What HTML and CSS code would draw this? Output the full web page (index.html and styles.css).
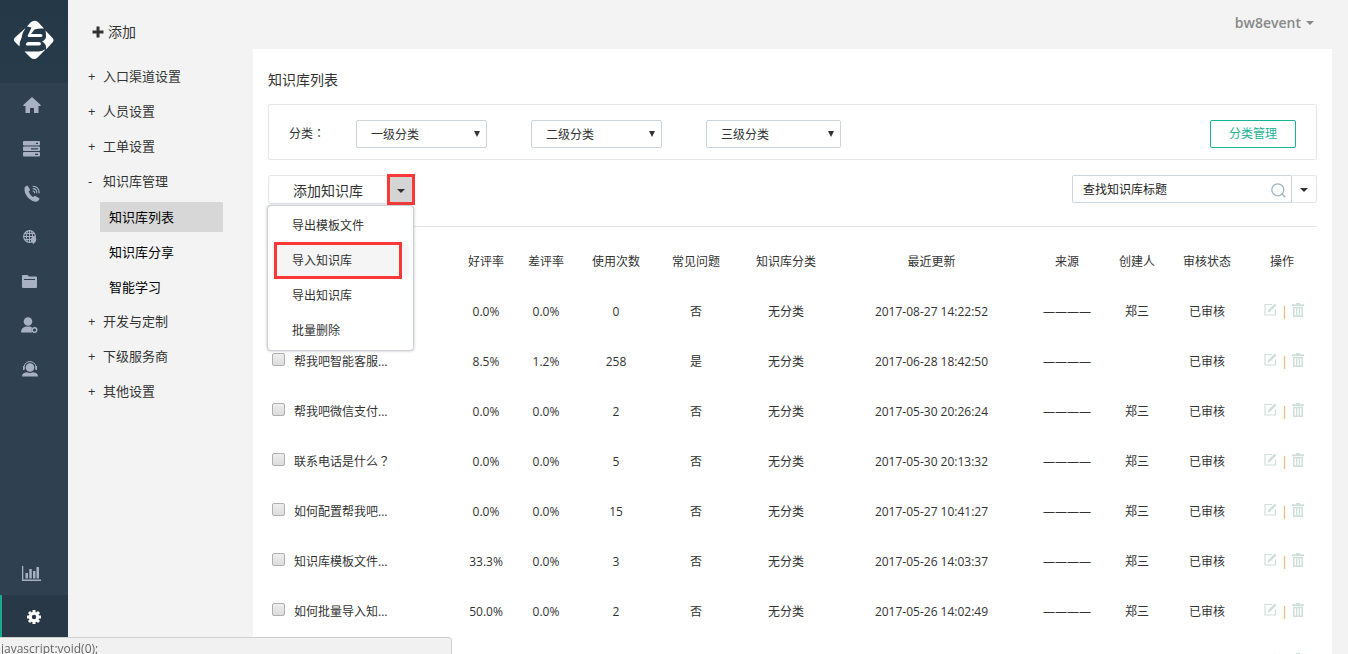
FILE: index.html
```html
<!DOCTYPE html>
<html lang="zh-CN">
<head>
<meta charset="utf-8">
<title>知识库列表</title>
<link rel="stylesheet" href="styles.css">
</head>
<body>
<svg class="defs" aria-hidden="true">
  <symbol id="edit" viewBox="0 0 13 13"><path d="M8 1.500H1v10.500h10.500V6.500" fill="none" stroke="currentColor" stroke-width="1.200"/><path d="M3.500 9.800l.8-2.800L10.800.5l1.700 1.700L6 8.800z" fill="currentColor"/></symbol>
  <symbol id="trash" viewBox="0 0 12 14"><path d="M0 1.200h4V0h4v1.200h4v2H0zM1 4h10v10H1zM2.500 5.200v7.300h1.500V5.200zM5.300 5.200v7.300h1.400V5.200zM8 5.200v7.300h1.500V5.200z" fill="currentColor" fill-rule="evenodd"/></symbol>
</svg>
<aside class="rail">
  <a class="logo" href="#" aria-label="首页">
    <svg width="40" height="40" viewBox="0 0 40 40"><path fill="#fff" d="M13 6.500l3.500-4Q20-.5 24 2l6 6.500q-6-.5-9.500 1L17 14h9.500q2 0 2 1.500t-2 1.500H14.500l-1-1 4-8.500zM11.500 8Q8 13 7.500 18q-2 3-2 8.500L1 22q-2.500-2 0-4.500zM14.500 22H25q2 0 2 1.800t-2 1.800H13q-1.500 0-1-1.800t2.500-1.800zM31.500 10.500l7 7.500q2 2 0 4.500L32 29.500q.5-3.500-1-5.500-1.500-2-3-2.500 4-2 4-5 0-3.500-.5-6zM10.500 31.500H25q4-.5 5.500-2l.5.500-7.500 7.500q-3.500 3-7 0z"/></svg>
  </a>
  <nav class="rail-nav">
    <a href="#" aria-label="主页"><svg width="18" height="16" viewBox="0 0 18 16"><path fill="currentColor" d="M9 0l9 8.300-.8.700H15.500v7H11v-5H7v5H2.500V9H.8L0 8.300z"/></svg></a>
    <a href="#" aria-label="工单"><svg width="18" height="16" viewBox="0 0 18 16"><path fill="currentColor" fill-rule="evenodd" d="M1 0h15q1 0 1 1v2.500q0 1-1 1H1q-1 0-1-1V1q0-1 1-1zM13 1.800v1.200h2V1.800zM1 5.500h15q1 0 1 1V9q0 1-1 1H1q-1 0-1-1V6.500q0-1 1-1zM8 7.300v1.200h7V7.300zM1 11h15q1 0 1 1v2.500q0 1-1 1H1q-1 0-1-1V12q0-1 1-1zM12 12.800v1.200h3v-1.200z"/></svg></a>
    <a href="#" aria-label="电话"><svg width="16" height="17" viewBox="0 0 16 17"><path fill="currentColor" d="M.8 2l2.700-1.500L6.200 5 4.700 6.500q1 3.500 4.300 5.500l2-1.200 4.700 2.700-1.200 2q-3.500 3-9-1.500Q-.7 8.500.8 2z"/><path fill="none" stroke="currentColor" stroke-width="1.100" d="M8.700 6q2 0 2 2.300M8.700 3.600q4.200 0 4.200 4.700M8.700 1.200q6.500 0 6.500 7.100"/></svg></a>
    <a class="shift" href="#" aria-label="网络"><svg width="14" height="14" viewBox="0 0 14 14"><circle cx="6.500" cy="6.500" r="5.800" fill="none" stroke="currentColor" stroke-width="1.200"/><path fill="none" stroke="currentColor" d="M6.500.5v12M.5 6.500h12M1.500 3.500h10M1.500 9.500h7M4.500 1Q2 6.500 4.500 12M8.500 1q2.500 5.500 0 11"/><path fill="currentColor" d="M10.500 7a2.800 2.800 0 0 1 2.800 2.800q0 1.700-2.800 4.200-2.800-2.500-2.800-4.200A2.800 2.800 0 0 1 10.500 7z"/></svg></a>
    <a class="shift" href="#" aria-label="文件"><svg width="15" height="13" viewBox="0 0 15 13"><path fill="currentColor" fill-rule="evenodd" d="M1 0h4.500L7 1.500h7q1 0 1 1V12q0 1-1 1H1q-1 0-1-1V1q0-1 1-1zM2 4v1h11V4z"/></svg></a>
    <a class="shift" href="#" aria-label="用户"><svg width="17" height="16" viewBox="0 0 17 16"><circle cx="7" cy="4.500" r="4.300" fill="currentColor"/><path fill="currentColor" d="M0 15.500q0-5 5-6h4q1.500.5 2 1-1 2.500 0 5z"/><circle cx="13.500" cy="13" r="2.300" fill="none" stroke="currentColor" stroke-width="1.500"/></svg></a>
    <a class="shift" href="#" aria-label="客服"><svg width="16" height="16" viewBox="0 0 16 16"><circle cx="8" cy="6.500" r="4.300" fill="currentColor"/><path fill="none" stroke="currentColor" stroke-width="1" d="M2 8V5.500Q3.500.6 8 .6t6 4.900V8"/><path fill="currentColor" d="M1 5h1.500v4H1zM13.500 5H15v4h-1.500zM0 15.500q0-4 5-4.300 3 1.500 6 0 5 .3 5 4.300z"/></svg></a>
  </nav>
  <nav class="rail-nav rail-foot">
    <a href="#" aria-label="统计"><svg width="20" height="15" viewBox="0 0 20 15"><path fill="currentColor" d="M0 0h1.300v13.500H19V15H0zM3.500 7H6v5.500H3.500zM7.300 3h2.500v9.500H7.300zM11 5h2.500v7.500H11zM14.500 1H17v11.500h-2.500z"/></svg></a>
    <a class="active" href="#" aria-label="设置"><svg width="14" height="14" viewBox="-7 -7 14 14"><circle r="3.700" fill="none" stroke="currentColor" stroke-width="3"/><path stroke="currentColor" stroke-width="3" d="M0-7v3M0 7V4M-7 0h3M7 0H4M-5-5l2 2M5 5L3 3M-5 5l2-2M5-5L3-3"/></svg></a>
  </nav>
</aside>

<nav class="side">
  <a class="add" href="#"><svg width="12" height="12" viewBox="0 0 12 12"><path stroke="currentColor" stroke-width="3" d="M6 .5v11M.5 6h11"/></svg>添加</a>
  <a class="group" href="#"><span class="sign">+</span>入口渠道设置</a>
  <a class="group" href="#"><span class="sign">+</span>人员设置</a>
  <a class="group" href="#"><span class="sign">+</span>工单设置</a>
  <a class="group" href="#"><span class="sign">-</span>知识库管理</a>
  <div class="subs">
    <a class="sub current" href="#">知识库列表</a>
    <a class="sub" href="#">知识库分享</a>
    <a class="sub" href="#">智能学习</a>
  </div>
  <a class="group" href="#"><span class="sign">+</span>开发与定制</a>
  <a class="group" href="#"><span class="sign">+</span>下级服务商</a>
  <a class="group" href="#"><span class="sign">+</span>其他设置</a>
</nav>

<div class="page">
  <header class="topbar"><button class="account" type="button">bw8event<span class="caret"></span></button></header>
  <main class="card">
    <h1>知识库列表</h1>
    <section class="filter">
      <label class="filter-label" for="c1">分类<span class="mid" lang="zh-TW">：</span></label>
      <span class="pick"><select id="c1"><option>一级分类</option></select><svg width="6" height="6" viewBox="0 0 6 6"><path d="M0 0h6L3 6z" fill="#333"/></svg></span>
      <span class="pick"><select aria-label="二级分类"><option>二级分类</option></select><svg width="6" height="6" viewBox="0 0 6 6"><path d="M0 0h6L3 6z" fill="#333"/></svg></span>
      <span class="pick wide"><select aria-label="三级分类"><option>三级分类</option></select><svg width="6" height="6" viewBox="0 0 6 6"><path d="M0 0h6L3 6z" fill="#333"/></svg></span>
      <button class="manage" type="button">分类管理</button>
    </section>
    <section class="tools">
      <div class="split">
        <button class="new" type="button">添加知识库</button>
        <button class="toggle open" type="button" aria-label="更多操作"><span class="caret"></span></button>
        <div class="menu">
          <button type="button">导出模板文件</button>
          <button class="hover" type="button">导入知识库</button>
          <button type="button">导出知识库</button>
          <button type="button">批量删除</button>
        </div>
      </div>
      <div class="search">
        <input type="text" placeholder="查找知识库标题" aria-label="查找知识库标题">
        <svg class="lens" width="15" height="15" viewBox="0 0 15 15"><circle cx="6.800" cy="6.800" r="6" fill="none" stroke="#9fb6c8" stroke-width="1.300"/><path d="M11 11l3.300 3.300" stroke="#9fb6c8" stroke-width="1.500"/></svg>
        <button class="toggle" type="button" aria-label="搜索选项"><span class="caret"></span></button>
      </div>
    </section>
    <table>
      <colgroup><col class="w188"><col class="w60"><col class="w60"><col class="w80"><col class="w80"><col class="w100"><col><col class="w80"><col class="w60"><col class="w80"><col class="w70"></colgroup>
      <thead><tr><th></th><th>好评率</th><th>差评率</th><th>使用次数</th><th>常见问题</th><th>知识库分类</th><th>最近更新</th><th>来源</th><th>创建人</th><th>审核状态</th><th>操作</th></tr></thead>
      <tbody id="rows"></tbody>
    </table>
  </main>
</div>
<div class="status">javascript:void(0);</div>
<script src="rows.js"></script>
</body>
</html>
```
FILE: rows.js
```js
const rows = [
  ["", "0.0%", "0.0%", "0", "否", "无分类", "2017-08-27 14:22:52", "————", "郑三", "已审核"],
  ["帮我吧智能客服...", "8.5%", "1.2%", "258", "是", "无分类", "2017-06-28 18:42:50", "————", "", "已审核"],
  ["帮我吧微信支付...", "0.0%", "0.0%", "2", "否", "无分类", "2017-05-30 20:26:24", "————", "郑三", "已审核"],
  ["联系电话是什么<span class='mid' lang='zh-TW'>？</span>", "0.0%", "0.0%", "5", "否", "无分类", "2017-05-30 20:13:32", "————", "郑三", "已审核"],
  ["如何配置帮我吧...", "0.0%", "0.0%", "15", "否", "无分类", "2017-05-27 10:41:27", "————", "郑三", "已审核"],
  ["知识库模板文件...", "33.3%", "0.0%", "3", "否", "无分类", "2017-05-26 14:03:37", "————", "郑三", "已审核"],
  ["如何批量导入知...", "50.0%", "0.0%", "2", "否", "无分类", "2017-05-26 14:02:49", "————", "郑三", "已审核"],
  ["", "", "", "", "", "", "", "", "", ""]
];
document.getElementById("rows").innerHTML = rows.map(([title, ...cells]) => `
  <tr>
    <td class="title"><label><input type="checkbox" aria-label="选择"><span>${title}</span></label></td>
    ${cells.map(c => `<td>${c}</td>`).join("")}
    <td><div class="ops">
      <button type="button" aria-label="编辑"><svg width="13" height="13"><use href="#edit"/></svg></button>
      <span class="bar">${cells[0] ? "|" : ""}</span>
      <button type="button" aria-label="删除"><svg width="12" height="14"><use href="#trash"/></svg></button>
    </div></td>
  </tr>`).join("");
```
FILE: styles.css
```css
* { box-sizing: border-box; }
body {
  margin: 0;
  display: flex;
  height: 100vh;
  overflow: hidden;
  background: #f3f3f4;
  color: #333;
  font: 12px/20px "Open Sans", "Noto Sans CJK SC", sans-serif;
}
a { color: inherit; text-decoration: none; }
button, input, select { font: inherit; color: inherit; margin: 0; }
button { padding: 0; border: 0; background: none; cursor: pointer; }
svg { display: block; }
.defs { position: absolute; width: 0; height: 0; }
.mid { font-family: "Noto Sans CJK TC", sans-serif; line-height: 1; }

.rail {
  flex: none;
  width: 68px;
  padding-bottom: 15px;
  display: flex;
  flex-direction: column;
  background: #2f4050;
  color: #a7b1c2;
}
.logo {
  height: 83px;
  padding-bottom: 4px;
  display: flex;
  align-items: center;
  justify-content: center;
  background: linear-gradient(#243848, #283b49);
}
.rail-nav a {
  height: 44px;
  padding-right: 4px;
  display: flex;
  align-items: center;
  justify-content: center;
}
.rail-nav .shift { padding-right: 9px; }
.rail-foot { margin-top: auto; }
.rail-nav .active {
  padding-right: 2px;
  border-left: 2px solid #19aa8d;
  background: #293846;
  color: #fff;
}

.side {
  flex: none;
  width: 185px;
  padding: 14px 30px 0 20px;
  font-size: 13px;
}
.side a { display: flex; align-items: center; }
.add { height: 35px; padding-left: 4px; margin-bottom: 9px; gap: 4px; font-size: 14px; }
.group { height: 35px; }
.sign { width: 15px; }
.subs {
  display: flex;
  flex-direction: column;
  gap: 5px;
  padding: 4px 0 1px 12px;
}
.sub { height: 30px; padding-left: 9px; color: #000; }
.current { background: #d7d7d7; }

.page {
  flex: 1;
  min-width: 0;
  padding-right: 16px;
  display: flex;
  flex-direction: column;
}
.topbar {
  flex: none;
  height: 49px;
  padding: 0 18px 4px;
  display: flex;
  align-items: center;
  justify-content: flex-end;
}
.account {
  display: flex;
  align-items: center;
  gap: 5px;
  font-size: 14px;
  font-weight: 600;
  color: #888;
}
.caret {
  border: 4px solid transparent;
  border-top-color: currentColor;
  border-bottom: 0;
}
.card { flex: 1; min-height: 0; overflow: hidden; padding: 21px 15px 0; background: #fff; }
h1 { margin: 0 0 14px; font-size: 14px; font-weight: 400; line-height: 20px; }

.filter {
  height: 56px;
  padding: 3px 20px 0;
  display: flex;
  align-items: center;
  border: 1px solid #e5e6e7;
  border-radius: 2px;
}
.filter-label { width: 67px; }
.pick { position: relative; width: 131px; margin-right: 44px; }
.pick.wide { width: 135px; }
.pick select {
  display: block;
  width: 100%;
  height: 28px;
  padding: 2px 14px 0;
  appearance: none;
  border: 1px solid #c8d4de;
  border-radius: 2px;
  background: #fff;
}
.pick svg { position: absolute; right: 7px; top: 11px; pointer-events: none; }
.manage {
  width: 86px;
  height: 28px;
  margin-left: auto;
  border: 1px solid #1ab394;
  border-radius: 2px;
  color: #1ab394;
}

.tools {
  padding: 15px 0 22px;
  display: flex;
  justify-content: space-between;
  border-bottom: 1px solid #e5e6e7;
}
.split { position: relative; display: flex; }
.new {
  width: 120px;
  height: 29px;
  padding-top: 2px;
  border: 1px solid #e5e6e7;
  border-radius: 3px;
  font-size: 14px;
}
.toggle {
  width: 26px;
  height: 28px;
  padding-top: 2px;
  display: flex;
  align-items: center;
  justify-content: center;
  border: 1px solid #e5e6e7;
  border-radius: 0 3px 3px 0;
}
.toggle.open {
  width: 28px;
  height: 31px;
  margin: -1px 0 -2px -1px;
  padding-right: 1px;
  border: 3px solid #fb3838;
  border-radius: 0;
  background: #d4d4d4;
}
.menu {
  position: absolute;
  top: 30px;
  left: -1px;
  width: 147px;
  padding: 4px;
  background: #fff;
  border: 1px solid #d0d0d8;
  border-radius: 4px;
  box-shadow: 0 0 3px rgba(86, 96, 117, .4);
}
.menu button {
  display: block;
  width: 100%;
  height: 31px;
  margin-bottom: 4px;
  padding-left: 20px;
  border-radius: 3px;
  text-align: left;
}
.menu button:last-child { margin-bottom: 0; }
.menu .hover { position: relative; background: #f5f5f5; }
.menu .hover::after {
  content: "";
  position: absolute;
  inset: -3px 7px -3px 2px;
  border: 3px solid #fb3838;
}
.search { position: relative; display: flex; }
.search input {
  width: 220px;
  height: 28px;
  padding: 0 30px 0 10px;
  border: 1px solid #c8d4de;
  border-radius: 2px;
}
.search input::placeholder { color: #222; opacity: 1; }
.search .toggle { margin-left: -1px; border-left: 0; }
.lens { position: absolute; right: 31px; top: 8px; }

table { width: 100%; margin-top: 10px; table-layout: fixed; border-collapse: collapse; }
.w188 { width: 188px; }
.w100 { width: 100px; }
.w80 { width: 80px; }
.w70 { width: 70px; }
.w60 { width: 60px; }
th, td { height: 50px; padding: 0; font-weight: 400; text-align: center; white-space: nowrap; }
.title label { display: flex; align-items: center; gap: 9px; padding-left: 4px; }
.title input {
  width: 13px;
  height: 13px;
  margin: 0 0 6px;
  appearance: none;
  border: 1px solid #b0b0b0;
  border-radius: 2px;
  background: linear-gradient(#eee, #dcdcdc);
}
.ops {
  height: 20px;
  padding-left: 4px;
  display: flex;
  align-items: center;
  justify-content: center;
  gap: 4px;
  color: #cfe0db;
}
.ops svg { margin-bottom: 5px; }
.bar { width: 7px; color: #dfa04e; }

.status {
  position: fixed;
  left: 0;
  bottom: 0;
  width: 452px;
  height: 17px;
  padding: 1px 0 0 1px;
  border: 1px solid #d0d0d0;
  border-width: 1px 1px 0 0;
  border-radius: 0 4px 0 0;
  background: #f1f1f1;
  color: #666;
  line-height: 20px;
}
```
